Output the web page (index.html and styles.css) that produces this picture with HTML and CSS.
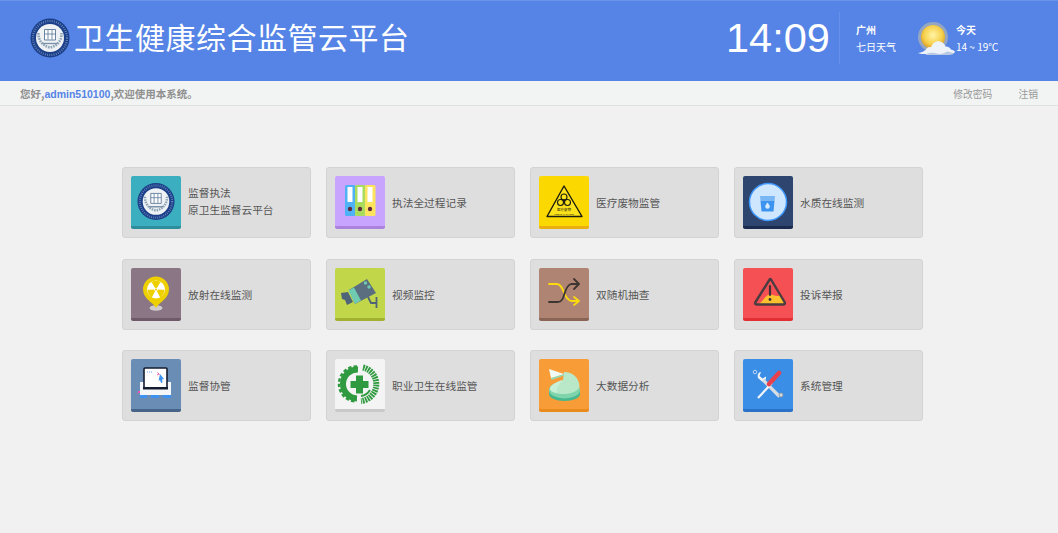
FILE: index.html
```html
<!DOCTYPE html>
<html lang="zh-CN">
<head>
<meta charset="utf-8">
<title>卫生健康综合监管云平台</title>
<link rel="stylesheet" href="styles.css">
</head>
<body>
<svg class="defs" width="0" height="0" aria-hidden="true">
  <symbol id="emblem" viewBox="0 0 40 40">
    <circle cx="20" cy="20" r="19.500" fill="#1b3f88"/>
    <circle cx="20" cy="20" r="17" fill="none" stroke="#6f8dc0" stroke-width="2.200" stroke-dasharray=".8 1.400"/>
    <circle cx="20" cy="20" r="14" fill="#eef2f4"/>
    <path d="M8.500 15c-.5 7 4 13 11.500 14.500C27.500 28 32 22 31.500 15" fill="none" stroke="#8da2b4" stroke-width="2.600" stroke-dasharray="1.600 1"/>
    <path d="M14.500 11.500h11v10.500h-11z" fill="#fbfcfc" stroke="#5a7698" stroke-width=".9"/>
    <path d="M18 12v9.500M22 12v9.500M14.500 16h11" stroke="#5a7698" stroke-width=".8"/>
    <path d="M12.500 25.500h15" stroke="#7d93aa" stroke-width="1.400"/>
  </symbol>
</svg>

<header class="topbar">
  <div class="brand">
    <svg class="brand-logo" width="40" height="40"><use href="#emblem"/></svg>
    <h1 class="brand-title">卫生健康综合监管云平台</h1>
  </div>
  <div class="status">
    <div class="clock">14:09</div>
    <div class="city">
      <strong class="line-top">广州</strong>
      <span>七日天气</span>
    </div>
    <svg class="weather-icon" width="40" height="40" viewBox="0 0 40 40" aria-hidden="true">
      <defs>
        <radialGradient id="sun" cx="50%" cy="42%" r="55%">
          <stop offset="0" stop-color="#fff4a8"/>
          <stop offset=".7" stop-color="#f6d04a"/>
          <stop offset="1" stop-color="#dfa52e"/>
        </radialGradient>
      </defs>
      <circle cx="17" cy="16" r="15" fill="#f3d98a" opacity=".4"/>
      <circle cx="17" cy="16" r="12" fill="url(#sun)"/>
      <path d="M2 32c4-.5 6-1.500 8-3.500 1-2 3-3 5-2 1-4 5-7 9-6 3 .5 5 3 5.500 5 2-.5 5 1 5.500 3 2 .5 4 1.500 4 2.500-1 1.500-4 2-8 2H10c-3 0-6 0-8-1z" fill="#eef3fa"/>
      <path d="M10 33c4-2 8-1.500 11-.5s7 0 10-2c2 0 5 1 7 2-1 1-4 1.500-8 1.500H10z" fill="#b9c9e4"/>
    </svg>
    <div class="forecast">
      <strong class="line-top">今天</strong>
      <span>14 ~ 19℃</span>
    </div>
  </div>
</header>

<nav class="subbar">
  <p class="welcome">您好,<span class="user">admin510100</span>,欢迎使用本系统。</p>
  <div class="sublinks">
    <a class="sublink">修改密码</a>
    <a class="sublink">注销</a>
  </div>
</nav>

<main class="grid">
  <a class="card">
    <span class="tile tile-teal">
      <svg class="glyph" viewBox="0 0 50 49"><use href="#emblem" x="6" y="6.500" width="38" height="38"/></svg>
    </span>
    <span class="label label-two">监督执法<br>原卫生监督云平台</span>
  </a>

  <a class="card">
    <span class="tile tile-purple">
      <svg class="glyph" viewBox="0 0 50 49">
        <rect x="10" y="9" width="10.500" height="31" rx="1.500" fill="#4fb2f6"/>
        <rect x="20" y="9" width="10.500" height="31" rx="1.500" fill="#a9dc5c"/>
        <rect x="30" y="9" width="10.500" height="31" rx="1.500" fill="#fde45e"/>
        <path d="M12.500 11h5v15h-5zM22.500 11h5v15h-5zM32.500 11h5v15h-5z" fill="#fff"/>
        <circle cx="15" cy="33" r="2.200" fill="#5f2a3c"/>
        <circle cx="25" cy="33" r="2.200" fill="#5f2a3c"/>
        <circle cx="35" cy="33" r="2.200" fill="#5f2a3c"/>
      </svg>
    </span>
    <span class="label">执法全过程记录</span>
  </a>

  <a class="card">
    <span class="tile tile-yellow">
      <svg class="glyph" viewBox="0 0 50 49">
        <path d="M25 10 8 40.500h35z" fill="#fce21a" stroke="#1c1c10" stroke-width="1.400" stroke-linejoin="round"/>
        <g fill="none" stroke="#1c1c10" stroke-width="1.100">
          <circle cx="25" cy="21" r="3"/>
          <circle cx="21.500" cy="26.500" r="3"/>
          <circle cx="28.500" cy="26.500" r="3"/>
        </g>
        <circle cx="25" cy="24.500" r="1.200" fill="#1c1c10"/>
        <text class="tiny-cn" x="25" y="35">医疗废物</text>
        <text class="tiny-en" x="25" y="39">MEDICAL WASTE</text>
      </svg>
    </span>
    <span class="label">医疗废物监管</span>
  </a>

  <a class="card">
    <span class="tile tile-navy">
      <svg class="glyph" viewBox="0 0 50 49">
        <circle cx="25" cy="26" r="18.500" fill="#cfe6ff" stroke="#3f98ff" stroke-width="1.500"/>
        <path d="M17 20h15l-.5 5H17.500z" fill="#79b6f4"/>
        <path d="M17.500 25h14l-1 10.500h-12z" fill="#3c93f0"/>
        <path d="M24.500 26.500c1.500 2 2.300 3 2.300 4a2.300 2.300 0 0 1-4.600 0c0-1 .8-2 2.300-4z" fill="#d7ebff"/>
      </svg>
    </span>
    <span class="label">水质在线监测</span>
  </a>

  <a class="card">
    <span class="tile tile-mauve">
      <svg class="glyph" viewBox="0 0 50 49">
        <ellipse cx="25" cy="40" rx="6.500" ry="2.800" fill="#cfcbcd"/>
        <path d="M25 40c-2-5-13-9-13-18.500a13 13 0 0 1 26 0C38 31 27 35 25 40z" fill="#eed000"/>
        <circle cx="25" cy="21.500" r="9" fill="#fff"/>
        <path d="M25 21.500 20.500 14a9 9 0 0 1 9 0zM25 21.500l8.500.2a9 9 0 0 1-4.300 7.700zM25 21.500l-4.200 7.900a9 9 0 0 1-4.300-7.700z" fill="#eed000"/>
        <circle cx="25" cy="21.500" r="1.800" fill="#fff"/>
        <circle cx="25" cy="21.500" r="1.100" fill="#eed000"/>
      </svg>
    </span>
    <span class="label">放射在线监测</span>
  </a>

  <a class="card">
    <span class="tile tile-lime">
      <svg class="glyph" viewBox="0 0 50 49">
        <path d="M6 25l7-1 5 10-6 3-2-5-3-1z" fill="#4f6478"/>
        <path d="M14 22 32 11l9 14-21 11z" fill="#5a6e80"/>
        <path d="M13.500 22.500 19 19.500l7 13-6 3.500z" fill="#6fcab0"/>
        <circle cx="30.500" cy="15" r="1.700" fill="#6fcab0"/>
        <circle cx="34" cy="19" r="1.700" fill="#6fcab0"/>
        <path d="M33 29l3 6h5.500M41.500 29v11" fill="none" stroke="#4f6478" stroke-width="1.800"/>
      </svg>
    </span>
    <span class="label">视频监控</span>
  </a>

  <a class="card">
    <span class="tile tile-brown">
      <svg class="glyph" viewBox="0 0 50 49">
        <path d="M10 16h8c7 0 6 15 14 17h7M35 29l5 4-5 4" fill="none" stroke="#fbd90f" stroke-width="1.800" stroke-linecap="round" stroke-linejoin="round"/>
        <path d="M10 34h9c8 0 5-16 13-18h7M35 11l5 5-5 5" fill="none" stroke="#3d3531" stroke-width="1.800" stroke-linecap="round" stroke-linejoin="round"/>
      </svg>
    </span>
    <span class="label">双随机抽查</span>
  </a>

  <a class="card">
    <span class="tile tile-red">
      <svg class="glyph" viewBox="0 0 50 49">
        <path d="M15 36c4-1 6-7 10-9s8 3 12 0l5 9z" fill="#fbc02d"/>
        <path d="M27 11 12.500 34c-1 1.500 0 2.500 1.500 2.500h26c1.500 0 2.500-1 1.500-2.500L28 11.500c-.3-.5-.7-.5-1-.5z" fill="none" stroke="#4a3c40" stroke-width="2.400" stroke-linejoin="round"/>
        <path d="M27 18v9" stroke="#3e3236" stroke-width="2.200" stroke-linecap="round"/>
        <circle cx="27" cy="31.500" r="1.400" fill="#3e3236"/>
      </svg>
    </span>
    <span class="label">投诉举报</span>
  </a>

  <a class="card">
    <span class="tile tile-steel">
      <svg class="glyph" viewBox="0 0 50 49">
        <path d="M9 23h31v13H9z" fill="#f4f6f8"/>
        <rect x="13" y="9" width="23" height="20" rx="1" fill="#fff" stroke="#141c30" stroke-width="1.600"/>
        <path d="M12 28h25v2.500H12z" fill="#141c30"/>
        <path d="M16 13h6" stroke="#6aa6f0" stroke-width="1" stroke-dasharray="1 1"/>
        <path d="M29 15l4 5-2 .5.500 3-1.500.5-1-3-1.500 1z" fill="#3d92f0"/>
        <path d="M26.500 13.500l2 2M26 16l2-1" stroke="#e85ab0" stroke-width="1"/>
        <path d="M6 35l3-3M7 32l2 2" stroke="#e85ab0" stroke-width="1"/>
        <path d="M9 36h7v3H9zM20 36h8v3h-8zM32 36h8v3h-8z" fill="#3d92f0"/>
      </svg>
    </span>
    <span class="label">监督协管</span>
  </a>

  <a class="card">
    <span class="tile tile-white">
      <svg class="glyph" viewBox="0 0 50 49">
        <path d="M23 10.500a14.500 14.500 0 0 0-1 29" fill="none" stroke="#2f9a3f" stroke-width="6"/>
        <path d="M22 7.500a17.500 17.500 0 0 0-1 35" fill="none" stroke="#2f9a3f" stroke-width="2.500" stroke-dasharray="3.500 2"/>
        <path d="M28 8.500a17 17 0 0 1-2 33.500" fill="none" stroke="#2f9a3f" stroke-width="6" stroke-dasharray="1.800 .8"/>
        <path d="M26 37a12.500 12.500 0 0 0 9-6" fill="none" stroke="#2f9a3f" stroke-width="2"/>
        <path d="M21 16.500h7v5.500h5.500v7H28v5.500h-7V29h-5.500v-7H21z" fill="#2f9a3f"/>
      </svg>
    </span>
    <span class="label">职业卫生在线监管</span>
  </a>

  <a class="card">
    <span class="tile tile-orange">
      <svg class="glyph" viewBox="0 0 50 49">
        <path d="M10 31v4c0 4 7 7 15.500 7S41 39 41 35v-4z" fill="#46b890"/>
        <ellipse cx="25.500" cy="31" rx="15.500" ry="8.500" fill="#7fd4ac"/>
        <path d="M25 13c9 0 15 6 15.500 14 0 4-7 8-15 8S11 33 11 30c0-3 6-7 13-9z" fill="#b8e8c8"/>
        <path d="M24 21c-6 1.500-13 5-13 9 0 1.500 3 3 7 4-1-5 2-9 6-13z" fill="#c9efd6"/>
        <path d="M12 19l13-4v1.500L12.500 21z" fill="#8fdcb8"/>
        <path d="M10 10 25 15 12 19z" fill="#f0fbf5"/>
      </svg>
    </span>
    <span class="label">大数据分析</span>
  </a>

  <a class="card">
    <span class="tile tile-blue">
      <svg class="glyph" viewBox="0 0 50 49">
        <circle cx="12" cy="13" r="1.800" fill="none" stroke="#b9d4f4" stroke-width="1"/>
        <path d="M15 19c-1-3 .5-6 3-6l-1.500 4 3 2.500 3.500-2c.5 3-1.500 5-4 5z" fill="#f2f5f8"/>
        <path d="M20 21 36.500 37.500" stroke="#d8dde3" stroke-width="3.200"/>
        <circle cx="38" cy="36" r="2" fill="#d8dde3" stroke="#8b99a8" stroke-width="1"/>
        <path d="M29 24 15 39" stroke="#f2f5f8" stroke-width="2.200"/>
        <path d="M26 25l10-11" stroke="#e8404c" stroke-width="4.600" stroke-linecap="round"/>
      </svg>
    </span>
    <span class="label">系统管理</span>
  </a>
</main>
</body>
</html>
```

FILE: styles.css
```css
* {
  box-sizing: border-box;
}

html,
body {
  margin: 0;
  height: 100%;
  overflow: hidden;
}

body {
  background: #f1f1f1;
  font-family: "Noto Sans CJK SC", "Liberation Sans", sans-serif;
  color: #555;
}

.defs {
  display: block;
  height: 0;
}

.topbar {
  height: 81px;
  display: flex;
  justify-content: space-between;
  align-items: flex-start;
  background: #5584e6;
  border-top: 1px solid #6a93ea;
  color: #fff;
}

.brand {
  display: flex;
  align-items: flex-start;
  padding: 17px 0 0 30px;
}

.brand-logo {
  display: block;
  flex: none;
}

.brand-title {
  margin: 0 0 0 4px;
  font-size: 30px;
  line-height: 36px;
  font-weight: 400;
  letter-spacing: .5px;
  white-space: nowrap;
}

.status {
  display: flex;
  align-items: flex-start;
  padding: 11px 57px 0 0;
}

.clock {
  width: 114px;
  height: 52px;
  font-family: "Liberation Sans", sans-serif;
  font-size: 41.500px;
  line-height: 52px;
  border-right: 1px solid #6690ea;
}

.city,
.forecast {
  display: flex;
  flex-direction: column;
  font-size: 10px;
  line-height: 14px;
  padding-top: 11px;
  white-space: nowrap;
}

.city {
  width: 78px;
  margin-left: 16px;
}

.line-top {
  font-weight: 700;
  margin-bottom: 3px;
}

.weather-icon {
  display: block;
  flex: none;
  margin: 9px 0 0 -18px;
}

.forecast {
  width: 45px;
}

.subbar {
  height: 25px;
  display: flex;
  justify-content: space-between;
  align-items: center;
  padding: 1px 20px 0 20px;
  background: #f2f4f4;
  border-bottom: 1px solid #dfe1e1;
}

.welcome {
  margin: 0;
  font-size: 10.500px;
  font-weight: 700;
  color: #8f8f8f;
}

.user {
  color: #5584e6;
  font-family: "Liberation Sans", sans-serif;
}

.sublinks {
  display: flex;
  gap: 26px;
}

.sublink {
  font-size: 9.800px;
  color: #999;
}

.grid {
  display: grid;
  grid-template-columns: repeat(4, 189px);
  grid-auto-rows: 71px;
  column-gap: 15px;
  row-gap: 20.500px;
  padding: 61px 0 0 122px;
}

.card {
  display: flex;
  align-items: center;
  padding: 0 8px;
  background: #dedede;
  border: 1px solid #d3d3d3;
  border-radius: 3px;
}

.tile {
  flex: none;
  width: 50px;
  height: 53px;
  border-radius: 2px;
  border-bottom: 3px solid;
  overflow: hidden;
}

.glyph {
  display: block;
  width: 50px;
  height: 49px;
}

.label {
  margin-left: 7px;
  font-size: 10.700px;
  line-height: 17px;
  color: #555;
}

.label-two {
  margin-bottom: 4px;
}

.tiny-cn,
.tiny-en {
  text-anchor: middle;
  fill: #1c1c10;
}

.tiny-cn {
  font-size: 3.500px;
}

.tiny-en {
  font-family: "Liberation Sans", sans-serif;
  font-size: 2.400px;
}

.tile-teal { background: #3bafbf; border-color: #2c8d9c; }
.tile-purple { background: #c9a4ff; border-color: #ab82de; }
.tile-yellow { background: #fbd800; border-color: #e9ae10; }
.tile-navy { background: #2e4570; border-color: #1b2b50; }
.tile-mauve { background: #8a7684; border-color: #6e5a68; }
.tile-lime { background: #c2d64a; border-color: #a2b230; }
.tile-brown { background: #b08472; border-color: #8a6455; }
.tile-red { background: #f55053; border-color: #e32f33; }
.tile-steel { background: #6a8db5; border-color: #466488; }
.tile-white { background: #f4f4f4; border-color: #c9c9c9; }
.tile-orange { background: #f89c38; border-color: #e88a1c; }
.tile-blue { background: #3a8ee6; border-color: #2a72c8; }
```
